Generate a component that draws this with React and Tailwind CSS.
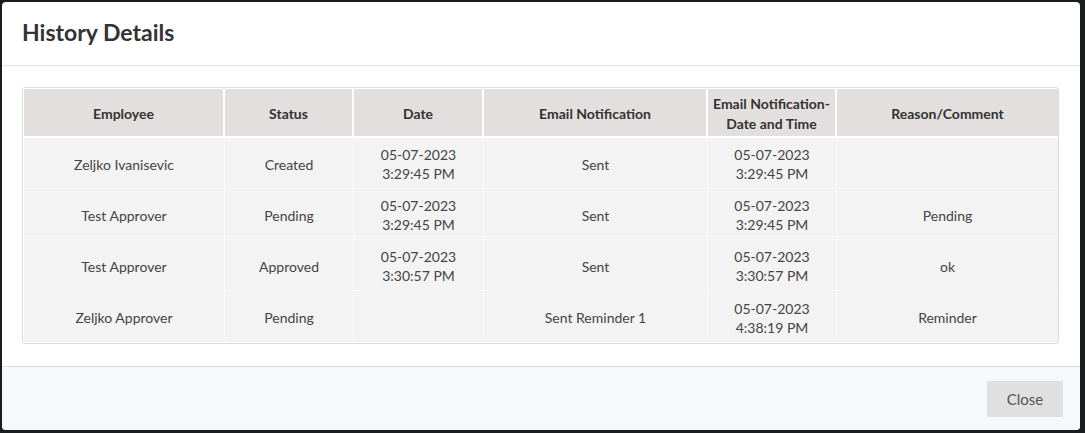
import React from 'react';

const rows = [
  { employee: 'Zeljko Ivanisevic', status: 'Created', date: ['05-07-2023', '3:29:45 PM'], email: 'Sent', emailDate: ['05-07-2023', '3:29:45 PM'], reason: '' },
  { employee: 'Test Approver', status: 'Pending', date: ['05-07-2023', '3:29:45 PM'], email: 'Sent', emailDate: ['05-07-2023', '3:29:45 PM'], reason: 'Pending' },
  { employee: 'Test Approver', status: 'Approved', date: ['05-07-2023', '3:30:57 PM'], email: 'Sent', emailDate: ['05-07-2023', '3:30:57 PM'], reason: 'ok' },
  { employee: 'Zeljko Approver', status: 'Pending', date: null, email: 'Sent Reminder 1', emailDate: ['05-07-2023', '4:38:19 PM'], reason: 'Reminder' },
];

const Lines = ({ value }) =>
  value ? (
    <>
      {value[0]}
      <br />
      {value[1]}
    </>
  ) : null;

const App = () => {
  return (
    <div className="w-[1085px] h-[433px] bg-[#1b1c1e] pt-[2px] pl-[2px] overflow-hidden" style={{ fontFamily: 'Lato, "Open Sans", sans-serif' }}>
      <div className="w-[1078px] h-[428px] bg-white rounded-[4px] flex flex-col overflow-hidden">
        {/* Header */}
        <div className="h-[64px] border-b border-[#e5e5e5] flex items-center px-[20px] pb-[2px] shrink-0">
          <h2 className="text-[23px] font-bold text-[#333] leading-none">History Details</h2>
        </div>

        {/* Body */}
        <div className="px-[20px] pt-[21px] pb-[22px] shrink-0">
          <div className="border border-[#dcdcdc] rounded-[3px] p-[1px] bg-white w-[1037px]">
            <table className="table-fixed border-separate border-spacing-0 w-[1034px] text-[14px] text-[#444]">
              <colgroup>
                <col className="w-[201px]" />
                <col className="w-[129px]" />
                <col className="w-[130px]" />
                <col className="w-[224px]" />
                <col className="w-[129px]" />
                <col className="w-[221px]" />
              </colgroup>
              <thead>
                <tr>
                  {['Employee', 'Status', 'Date', 'Email Notification', 'Email Notification-\nDate and Time', 'Reason/Comment'].map((h, i) => (
                    <th
                      key={i}
                      className={`h-[49px] pt-[2px] bg-[#e2dfde] font-bold text-[14px] text-[#333] leading-[20px] text-center align-middle whitespace-pre-line border-b-2 border-white ${i < 5 ? 'border-r-2' : ''}`}
                    >
                      {h}
                    </th>
                  ))}
                </tr>
              </thead>
              <tbody>
                {rows.map((r, ri) => {
                  const cells = [r.employee, r.status, <Lines value={r.date} />, r.email, <Lines value={r.emailDate} />, r.reason];
                  return (
                    <tr key={ri}>
                      {cells.map((c, ci) => (
                        <td
                          key={ci}
                          className={`h-[51px] pt-[2px] bg-[#f3f3f3] text-center align-middle leading-[19px] ${ri < 3 ? 'border-b border-dotted border-white' : ''} ${ci < 5 ? 'border-r border-dotted border-white' : ''}`}
                        >
                          {c}
                        </td>
                      ))}
                    </tr>
                  );
                })}
              </tbody>
            </table>
          </div>
        </div>

        {/* Footer */}
        <div className="flex-1 bg-[#f7f8fa] border-t border-[#dedede] flex justify-end items-start pt-[14px] pr-[17px]">
          <button className="w-[76px] h-[36px] bg-[#e0e0e0] text-[#555] text-[15px] rounded-[1px]">Close</button>
        </div>
      </div>
    </div>
  );
};

export default App;
